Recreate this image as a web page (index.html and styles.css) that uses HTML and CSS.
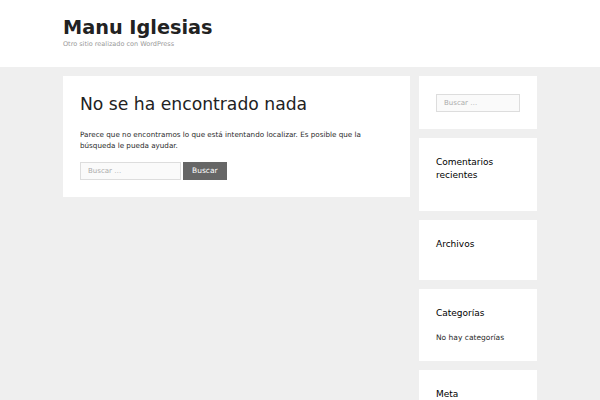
FILE: index.html
```html
<!DOCTYPE html>
<html lang="es">
  <head>
    <meta charset="utf-8" />
    <title>No se ha encontrado nada – Manu Iglesias</title>
    <link rel="stylesheet" href="styles.css">
  </head>
  <body>
    <header class="site-header">
      <div class="inside-header">
        <p class="site-title">Manu Iglesias</p>
        <p class="site-description">Otro sitio realizado con WordPress</p>
      </div>
    </header>

    <div class="site-content">
      <main class="content-area">
        <section class="no-results">
          <h1 class="page-title">No se ha encontrado nada</h1>
          <p>
            Parece que no encontramos lo que está intentando localizar. Es
            posible que la búsqueda le pueda ayudar.
          </p>
          <form class="search-form">
            <input type="search" class="search-field" placeholder="Buscar …" />
            <button type="button" class="search-submit">Buscar</button>
          </form>
        </section>
      </main>

      <aside class="sidebar">
        <div class="widget">
          <input type="search" class="search-field" placeholder="Buscar …" />
        </div>
        <div class="widget">
          <h2 class="widget-title">Comentarios recientes</h2>
        </div>
        <div class="widget">
          <h2 class="widget-title">Archivos</h2>
        </div>
        <div class="widget">
          <h2 class="widget-title">Categorías</h2>
          <ul>
            <li>No hay categorías</li>
          </ul>
        </div>
        <div class="widget">
          <h2 class="widget-title">Meta</h2>
        </div>
      </aside>
    </div>
  </body>
</html>
```

FILE: styles.css
```css
html {
  font-family: "DejaVu Sans", sans-serif;
}

body {
  margin: 0;
  background-color: #efefef;
  color: #2a2a2a;
  font-size: 7.2px;
  line-height: 1.55;
}

.site-header {
  background-color: #fff;
}

.inside-header {
  width: 474px;
  margin: 0 auto;
  padding: 16px 0 18px;
}

.site-title {
  margin: 0;
  font-size: 19.3px;
  font-weight: bold;
  line-height: 1.2;
  color: #222;
}

.site-description {
  margin: 1px 0 0;
  font-size: 6.5px;
  line-height: 1.4;
  color: #999;
}

.site-content {
  width: 474px;
  margin: 9px auto 0;
  display: flex;
  gap: 9px;
  align-items: flex-start;
}

.content-area {
  flex: 0 0 347px;
}

.no-results {
  background-color: #fff;
  padding: 17px;
}

.page-title {
  margin: 0 0 13px;
  font-size: 17.2px;
  font-weight: normal;
  line-height: 1.3;
  color: #222;
}

.no-results p {
  margin: 0 0 11px;
}

.search-form {
  display: flex;
  gap: 2px;
}

.search-field {
  box-sizing: border-box;
  width: 101px;
  height: 18px;
  padding: 0 7px;
  border: 1px solid #ddd;
  background-color: #fafafa;
  font-family: inherit;
  font-size: 7px;
  color: #666;
}

.search-field::placeholder {
  color: #aaa;
}

.search-submit {
  height: 18px;
  padding: 0 9px;
  border: none;
  background-color: #666;
  color: #fff;
  font-family: inherit;
  font-size: 7.5px;
}

.sidebar {
  flex: 0 0 118px;
  display: flex;
  flex-direction: column;
  gap: 9px;
}

.widget {
  background-color: #fff;
  padding: 18px 17px 17px;
}

.widget .search-field {
  width: 84px;
}

.widget-title {
  margin: 0 0 12px;
  font-size: 9px;
  font-weight: normal;
  line-height: 1.45;
  color: #000;
}

.widget ul {
  margin: 0;
  padding: 0;
  list-style: none;
  font-size: 7.5px;
}
```
